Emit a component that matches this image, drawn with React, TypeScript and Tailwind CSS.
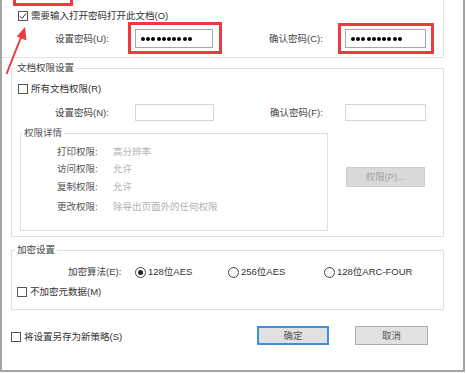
import React from "react";

function Box({ checked }: { checked?: boolean }) {
  return (
    <span className="flex w-[10px] h-[10px] border border-[#555] bg-white items-center justify-center shrink-0">
      {checked && (
        <svg width="8" height="8" viewBox="0 0 8 8">
          <path d="M0.8 4.2 L3 6.4 L7.2 1.2" stroke="#333" strokeWidth="1" fill="none" />
        </svg>
      )}
    </span>
  );
}

function Radio({ on }: { on?: boolean }) {
  return (
    <span className="flex w-[11px] h-[11px] rounded-full border border-[#444] items-center justify-center shrink-0 bg-white">
      {on && <span className="w-[5px] h-[5px] rounded-full bg-[#222]" />}
    </span>
  );
}

function Dots() {
  return (
    <div className="flex items-center gap-[1.2px] pl-[5px] h-full">
      {Array.from({ length: 10 }).map((_, i) => (
        <span key={i} className="w-[4px] h-[4px] rounded-full bg-black" />
      ))}
    </div>
  );
}

export default function App() {
  return (
    <div className="w-[466px] h-[373px] bg-white relative overflow-hidden font-['Liberation_Sans','Noto_Sans_CJK_SC',sans-serif] text-[9.5px] text-[#333]">
      <div className="w-[465px] h-[372px] border-l-2 border-r-2 border-b-2 border-[#a3a3a3] flex flex-col">
        {/* top section */}
        <div className="w-[442px] h-[58px] border-r border-b border-[#e2e2e2] flex flex-col shrink-0">
          <div className="mt-[10px] ml-[16px] flex items-center h-[11px] gap-[3px] leading-[12px]">
            <Box checked />
            <span>需要输入打开密码打开此文档(O)</span>
          </div>
          <div className="mt-[8px] flex items-center h-[19px] pl-[53px] leading-[12px]">
            <span className="w-[80px] text-[#444]">设置密码(U):</span>
            <div className="relative w-[78px] h-[19px] border border-[#a8a8a8] bg-white">
              <Dots />
              <div className="absolute left-[-8px] top-[-8px] w-[94px] h-[32px] border-[3px] border-[#ec3a3f]" />
            </div>
            <span className="ml-[56px] w-[76px] text-[#444]">确认密码(C):</span>
            <div className="relative w-[81px] h-[19px] border border-[#a8a8a8] bg-white">
              <Dots />
              <div className="absolute left-[-8px] top-[-7px] w-[96px] h-[31px] border-[3px] border-[#ec3a3f]" />
            </div>
          </div>
        </div>

        {/* 文档权限设置 */}
        <fieldset className="ml-[9px] mt-[4px] w-[433px] border border-[#e0e0e0] pb-[5px] shrink-0">
          <legend className="ml-[3px] px-[2px] leading-[12px] text-[#444]">文档权限设置</legend>
          <div className="mt-[9px] ml-[6px] flex items-center h-[11px] gap-[3px] leading-[12px]">
            <Box />
            <span>所有文档权限(R)</span>
          </div>
          <div className="mt-[10px] flex items-center h-[17px] pl-[43px] leading-[12px]">
            <span className="w-[80px] text-[#444]">设置密码(N):</span>
            <div className="w-[79px] h-[17px] border border-[#d6d6d6] bg-white" />
            <span className="ml-[56px] w-[75px] text-[#444]">确认密码(F):</span>
            <div className="w-[81px] h-[17px] border border-[#d6d6d6] bg-white" />
          </div>
          <div className="mt-[6px] flex items-start">
            <fieldset className="ml-[8px] w-[308px] border border-[#e0e0e0] pb-[17px]">
              <legend className="ml-[1px] px-[2px] leading-[12px] text-[#555]">权限详情</legend>
              <div className="mt-[7px] flex h-[12px] leading-[12px] pl-[36px]">
                <span className="w-[56px] text-[#555]">打印权限:</span>
                <span className="text-[#b2b2b2]">高分辨率</span>
              </div>
              <div className="mt-[5px] flex h-[12px] leading-[12px] pl-[36px]">
                <span className="w-[56px] text-[#555]">访问权限:</span>
                <span className="text-[#b2b2b2]">允许</span>
              </div>
              <div className="mt-[6px] flex h-[12px] leading-[12px] pl-[36px]">
                <span className="w-[56px] text-[#555]">复制权限:</span>
                <span className="text-[#b2b2b2]">允许</span>
              </div>
              <div className="mt-[8px] flex h-[12px] leading-[12px] pl-[36px]">
                <span className="w-[56px] text-[#555]">更改权限:</span>
                <span className="text-[#b2b2b2]">除导出页面外的任何权限</span>
              </div>
            </fieldset>
            <div className="ml-[18px] mt-[40px] w-[79px] h-[20px] bg-[#d9d9d9] border border-[#cfcfcf] flex items-center justify-center text-[#a3a3a3] leading-[12px]">
              权限(P)...
            </div>
          </div>
        </fieldset>

        {/* 加密设置 */}
        <fieldset className="ml-[9px] mt-[7px] w-[433px] border border-[#e0e0e0] pb-[11px] shrink-0">
          <legend className="ml-[3px] px-[2px] leading-[12px] text-[#444]">加密设置</legend>
          <div className="mt-[10px] flex items-center h-[12px] leading-[12px] pl-[56px]">
            <span className="w-[67px] text-[#444]">加密算法(E):</span>
            <div className="w-[93px] flex items-center gap-[2px]">
              <Radio on />
              <span>128位AES</span>
            </div>
            <div className="w-[96px] flex items-center gap-[2px]">
              <Radio />
              <span>256位AES</span>
            </div>
            <div className="flex items-center gap-[2px]">
              <Radio />
              <span>128位ARC-FOUR</span>
            </div>
          </div>
          <div className="mt-[8px] ml-[5px] flex items-center h-[12px] gap-[3px] leading-[12px]">
            <Box />
            <span>不加密元数据(M)</span>
          </div>
        </fieldset>

        {/* bottom */}
        <div className="mt-[16px] h-[19px] flex items-center shrink-0">
          <div className="ml-[9px] flex items-center gap-[3px] flex-1 leading-[12px] pt-[2px]">
            <Box />
            <span>将设置另存为新策略(S)</span>
          </div>
          <div className="flex gap-[26px] mr-[35px]">
            <div className="w-[72px] h-[19px] bg-[#e1e1e1] border-2 border-[#3f8fdc] flex items-center justify-center text-[#555] leading-[12px]">
              确定
            </div>
            <div className="w-[73px] h-[19px] bg-[#e1e1e1] border border-[#adadad] flex items-center justify-center text-[#555] leading-[12px]">
              取消
            </div>
          </div>
        </div>
      </div>

      {/* annotations */}
      <div className="absolute left-[13px] top-[-10px] w-[60px] h-[16px] border-[3px] border-[#ec3a3f]" />
      <svg className="absolute left-0 top-0" width="40" height="80" viewBox="0 0 40 80">
        <line x1="6.5" y1="74" x2="21.5" y2="36" stroke="#ec3a3f" strokeWidth="2" />
        <polygon points="25,27 26.5,40.5 16.8,36.6" fill="#ec3a3f" />
      </svg>
    </div>
  );
}
